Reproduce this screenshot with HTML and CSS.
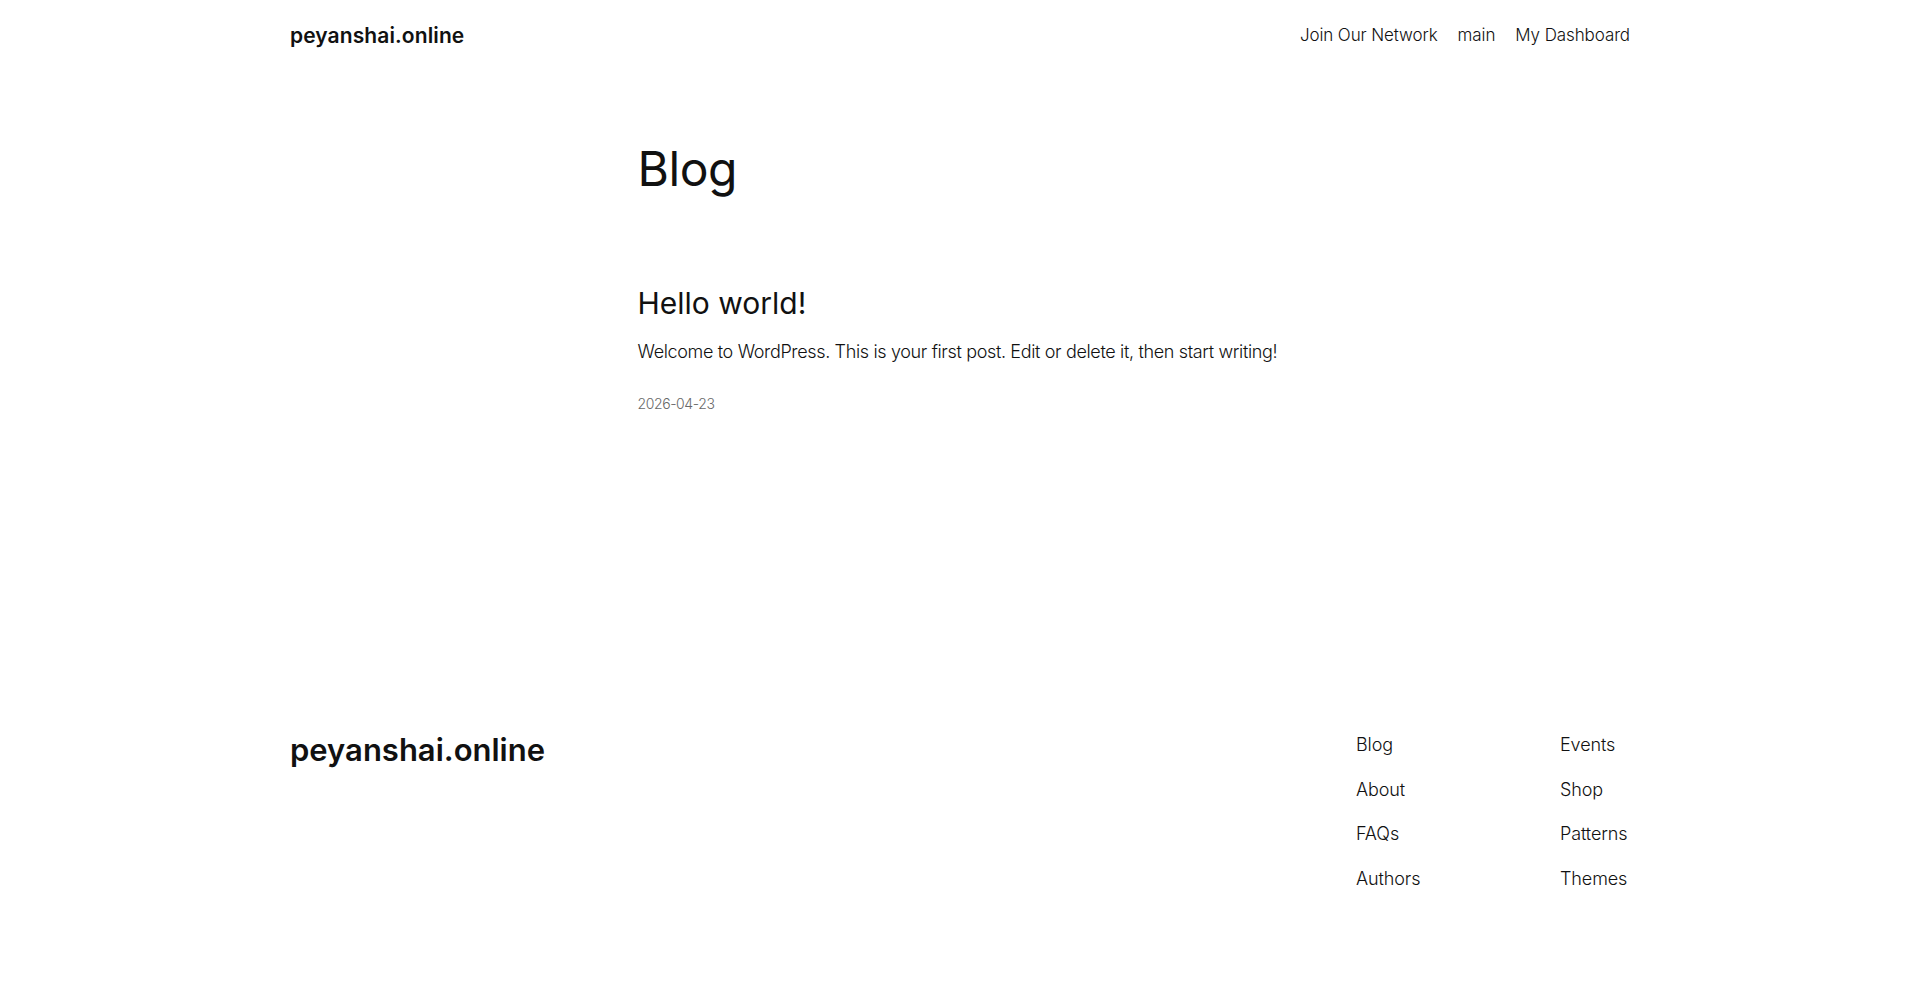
FILE: index.html
```html
<!DOCTYPE html>
<html lang="en">
<head>
<meta charset="utf-8">
<title>Blog – peyanshai.online</title>
<link rel="stylesheet" href="styles.css">
</head>
<body>
<div class="site">
  <header class="site-header">
    <div class="wide header-row">
      <a class="site-title" href="#">peyanshai.online</a>
      <nav class="header-nav">
        <a href="#">Join Our Network</a>
        <a href="#">main</a>
        <a href="#">My Dashboard</a>
      </nav>
    </div>
  </header>

  <main class="site-main">
    <div class="content">
      <h1 class="page-title">Blog</h1>
      <article class="post">
        <h2 class="post-title"><a href="#">Hello world!</a></h2>
        <p class="post-excerpt">Welcome to WordPress. This is your first post. Edit or delete it, then start writing!</p>
        <time class="post-date" datetime="2026-04-23">2026-04-23</time>
      </article>
    </div>
  </main>

  <footer class="site-footer">
    <div class="wide footer-row">
      <a class="footer-title" href="#">peyanshai.online</a>
      <div class="footer-navs">
        <nav class="footer-col first">
          <a href="#">Blog</a>
          <a href="#">About</a>
          <a href="#">FAQs</a>
          <a href="#">Authors</a>
        </nav>
        <nav class="footer-col second">
          <a href="#">Events</a>
          <a href="#">Shop</a>
          <a href="#">Patterns</a>
          <a href="#">Themes</a>
        </nav>
      </div>
    </div>
  </footer>
</div>
</body>
</html>
```

FILE: styles.css
```css
* {
  box-sizing: border-box;
}

html, body {
  margin: 0;
  padding: 0;
  background: #ffffff;
}

body {
  font-family: "Inter", "Noto Sans", "Liberation Sans", sans-serif;
  font-weight: 300;
  font-size: 18px;
  line-height: 1.4;
  color: #111111;
  letter-spacing: -0.1px;
}

a {
  color: inherit;
  text-decoration: none;
}

.wide {
  width: 1340px;
  margin: 0 auto;
}

.content {
  width: 645px;
  margin: 0 auto;
}

/* Header */
.site-header {
  padding: 22px 0 20px;
}

.header-row {
  display: flex;
  align-items: center;
  justify-content: space-between;
}

.site-title {
  font-size: 21px;
  font-weight: 600;
  line-height: 28px;
  letter-spacing: 0.1px;
}

.header-nav {
  display: flex;
  gap: 20px;
  font-size: 17px;
  line-height: 25.2px;
}

/* Main */
.site-main {
  padding-top: 70px;
}

.page-title {
  margin: 0;
  font-size: 48px;
  font-weight: 400;
  line-height: 57.6px;
  letter-spacing: -0.4px;
}

.post {
  margin-top: 87px;
}

.post-title {
  margin: 0;
  font-size: 30px;
  font-weight: 400;
  line-height: 36px;
  letter-spacing: 0;
}

.post-excerpt {
  margin: 18.5px 0 0;
  font-size: 18px;
  line-height: 25.2px;
  letter-spacing: -0.35px;
  white-space: nowrap;
}

.post-date {
  display: block;
  margin-top: 29px;
  font-size: 14px;
  line-height: 21px;
  letter-spacing: -0.4px;
  color: #686868;
}

/* Footer */
.site-footer {
  padding-top: 315px;
  padding-bottom: 60px;
}

.footer-row {
  display: flex;
  justify-content: space-between;
  align-items: flex-start;
}

.footer-title {
  margin-top: 3px;
  font-size: 31px;
  font-weight: 600;
  line-height: 36px;
  letter-spacing: 0;
}

.footer-navs {
  display: flex;
  margin-top: 3px;
}

.footer-col {
  display: flex;
  flex-direction: column;
  gap: 18px;
  font-size: 18px;
  line-height: 26.4px;
}

.footer-col.first {
  width: 204px;
}

.footer-col.second {
  width: 70px;
}
```
